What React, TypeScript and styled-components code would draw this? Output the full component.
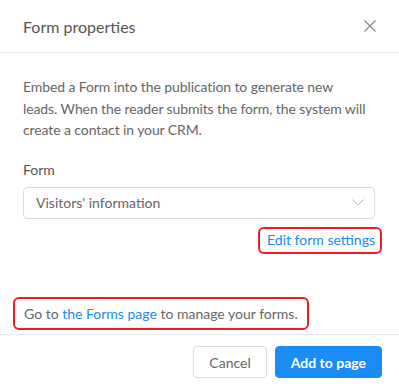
import styled, { createGlobalStyle } from 'styled-components';

const GlobalStyle = createGlobalStyle`
  html, body {
    margin: 0;
    padding: 0;
    background: #ffffff;
  }
  body {
    font-family: Lato, 'Open Sans', Arial, sans-serif;
  }
`;

const Dialog = styled.div`
  width: 399px;
  height: 386px;
  background: #ffffff;
  display: flex;
  flex-direction: column;
  box-sizing: border-box;
`;

const Header = styled.div`
  height: 53px;
  box-sizing: border-box;
  display: flex;
  align-items: center;
  justify-content: space-between;
  padding: 0 23px 0 23px;
  border-bottom: 1px solid #e8e8e8;
`;

const Title = styled.h2`
  margin: 0;
  font-size: 16px;
  font-weight: 400;
  color: #555555;
`;

const CloseButton = styled.button`
  border: none;
  background: none;
  padding: 0;
  width: 12px;
  height: 12px;
  display: flex;
  cursor: pointer;
`;

const Body = styled.div`
  flex: 1;
  display: flex;
  flex-direction: column;
  padding: 23px 20px 0 23px;
`;

const Description = styled.p`
  margin: 0;
  font-size: 14px;
  line-height: 21.5px;
  letter-spacing: -0.1px;
  color: #666666;
`;

const Label = styled.div`
  margin-top: 20px;
  font-size: 14px;
  color: #555555;
`;

const Select = styled.div`
  margin-top: 9px;
  margin-right: 4px;
  height: 32px;
  box-sizing: border-box;
  border: 1px solid #dcdcdc;
  border-radius: 4px;
  display: flex;
  align-items: center;
  justify-content: space-between;
  padding: 0 10px 0 12px;
  font-size: 14px;
  color: #666666;
`;

const Highlight = styled.div<{ $align: 'start' | 'end' }>`
  align-self: ${({ $align }) => ($align === 'end' ? 'flex-end' : 'flex-start')};
  border: 2px solid #ee1c24;
  border-radius: 6px;
  box-sizing: border-box;
  display: flex;
  align-items: center;
`;

const EditBox = styled(Highlight)`
  margin-top: 8px;
  margin-right: -3px;
  height: 27px;
  padding: 0 5px 1px 7px;
`;

const FooterNote = styled(Highlight)`
  margin-top: auto;
  margin-left: -10px;
  margin-bottom: 4px;
  height: 33px;
  padding: 0 9px;
  font-size: 14px;
  color: #666666;
`;

const Link = styled.a`
  color: #1a8cf5;
  text-decoration: none;
  font-size: 14px;
  cursor: pointer;
`;

const Footer = styled.div`
  height: 52px;
  box-sizing: border-box;
  border-top: 1px solid #e8e8e8;
  display: flex;
  justify-content: flex-end;
  align-items: flex-start;
  gap: 8px;
  padding: 11px 17px 0 0;
`;

const Button = styled.button<{ $primary?: boolean }>`
  height: 32px;
  box-sizing: border-box;
  border-radius: 4px;
  font-family: inherit;
  font-size: 14px;
  cursor: pointer;
  padding: 0 15px;
  border: 1px solid ${({ $primary }) => ($primary ? '#1a8cf5' : '#dcdcdc')};
  background: ${({ $primary }) => ($primary ? '#1a8cf5' : '#ffffff')};
  color: ${({ $primary }) => ($primary ? '#ffffff' : '#666666')};
  font-weight: ${({ $primary }) => ($primary ? 700 : 400)};
`;

const CloseIcon = () => (
  <svg width="12" height="12" viewBox="0 0 12 12">
    <path d="M0.5 0.5 L11.5 11.5 M11.5 0.5 L0.5 11.5" stroke="#8a8a8a" strokeWidth="1.3" fill="none" />
  </svg>
);

const Chevron = () => (
  <svg width="12" height="7" viewBox="0 0 12 7">
    <path d="M0.5 0.5 L6 6 L11.5 0.5" stroke="#b8b8b8" strokeWidth="1" fill="none" />
  </svg>
);

export default function App() {
  return (
    <>
      <GlobalStyle />
      <Dialog>
        <Header>
          <Title>Form properties</Title>
          <CloseButton aria-label="Close">
            <CloseIcon />
          </CloseButton>
        </Header>
        <Body>
          <Description>
            Embed a Form into the publication to generate new
            <br />
            leads. When the reader submits the form, the system will create a contact in your
            CRM.
          </Description>
          <Label>Form</Label>
          <Select>
            <span>Visitors' information</span>
            <Chevron />
          </Select>
          <EditBox $align="end">
            <Link>Edit form settings</Link>
          </EditBox>
          <FooterNote $align="start">
            <span>
              Go to <Link>the Forms page</Link> to manage your forms.
            </span>
          </FooterNote>
        </Body>
        <Footer>
          <Button>Cancel</Button>
          <Button $primary>Add to page</Button>
        </Footer>
      </Dialog>
    </>
  );
}
